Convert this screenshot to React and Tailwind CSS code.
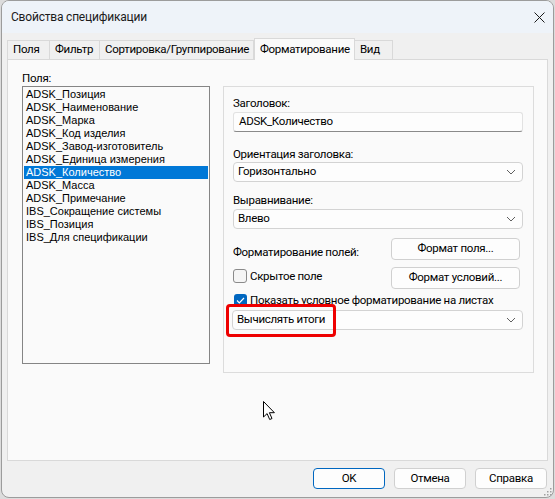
import React from 'react';

const ui = { fontFamily: 'Roboto, "Liberation Sans", sans-serif' };
const listFont = { fontFamily: '"Liberation Sans", Arial, sans-serif' };

const fields = [
  'ADSK_Позиция',
  'ADSK_Наименование',
  'ADSK_Марка',
  'ADSK_Код изделия',
  'ADSK_Завод-изготовитель',
  'ADSK_Единица измерения',
  'ADSK_Количество',
  'ADSK_Масса',
  'ADSK_Примечание',
  'IBS_Сокращение системы',
  'IBS_Позиция',
  'IBS_Для спецификации',
];

const tabs = [
  { label: 'Поля', w: 'w-[43px]' },
  { label: 'Фильтр', w: 'w-[51px]' },
  { label: 'Сортировка/Группирование', w: 'w-[155px]' },
  { label: 'Форматирование', w: 'w-[101px]', active: true },
  { label: 'Вид', w: 'w-[39px]' },
];

const Chevron = () => (
  <svg width="10" height="6" viewBox="0 0 10 6" className="shrink-0">
    <path d="M1 1l4 4 4-4" fill="none" stroke="#5f5f5f" strokeWidth="1" />
  </svg>
);

const Select = ({ value }) => (
  <div className="flex h-[20px] items-center justify-between rounded-[4px] border border-[#d3d3d3] bg-[#fdfdfd] pl-[4px] pr-[6px] text-black">
    <span>{value}</span>
    <Chevron />
  </div>
);

const Button = ({ children, primary, className = '' }) => (
  <div
    className={`flex items-center justify-center rounded-[4px] border bg-[#fdfdfd] text-black ${
      primary ? 'border-[#0067c0]' : 'border-[#d0d0d0]'
    } ${className}`}
  >
    {children}
  </div>
);

const Checkbox = ({ checked }) =>
  checked ? (
    <div className="flex h-[13px] w-[13px] shrink-0 items-center justify-center rounded-[3px] bg-[#0067c0]">
      <svg width="9" height="7" viewBox="0 0 9 7">
        <path d="M1 3.5l2.3 2.3L8 1" fill="none" stroke="#fff" strokeWidth="1.2" />
      </svg>
    </div>
  ) : (
    <div className="h-[14px] w-[14px] shrink-0 rounded-[3px] border border-[#8a8a8a] bg-[#f5f5f5]" />
  );

export default function App() {
  return (
    <div
      className="relative h-[499px] w-[555px] overflow-hidden whitespace-nowrap bg-[#dcdcdc] text-[11.5px] tracking-[-0.3px]"
      style={ui}
    >
      <div className="ml-[1px] flex h-[498px] w-[553px] flex-col overflow-hidden rounded-[8px] border border-[#9c9c9c] bg-[#f0f0f0]">
        {/* title bar */}
        <div className="flex h-[32px] shrink-0 items-center justify-between bg-[#eef3f9] pl-[9px] pr-[8px]">
          <span className="text-[12px] tracking-[-0.2px] text-[#1b1b1b]">Свойства спецификации</span>
          <svg width="11" height="11" viewBox="0 0 11 11">
            <path d="M0.5 0.5l10 10M10.5 0.5l-10 10" stroke="#1b1b1b" strokeWidth="1" />
          </svg>
        </div>

        <div className="flex flex-1 flex-col px-[5px] pt-[5px]">
          {/* tabs */}
          <div className="relative z-10 flex h-[21px] items-end">
            {tabs.map((t) => (
              <div
                key={t.label}
                className={`flex items-center border border-b-0 border-[#d9d9d9] text-black ${t.w} ${
                  t.active ? '-mb-px h-[22px] bg-[#fafafa] pl-[5px]' : 'h-[19px] bg-[#f0f0f0] pl-[5px] -ml-px first:ml-0'
                }`}
              >
                {t.label}
              </div>
            ))}
          </div>

          {/* page */}
          <div className="flex h-[402px] border border-[#d9d9d9] bg-[#fafafa] pl-[14px] pt-[10px]">
            <div className="flex flex-col">
              <div className="h-[16px] leading-[16px] text-black">Поля:</div>
              <div
                className="h-[278px] w-[188px] border border-[#858585] bg-[#fafafa] p-[1px] tracking-normal"
                style={listFont}
              >
                {fields.map((f) => (
                  <div
                    key={f}
                    className={`h-[13px] pl-[2px] text-[11px] leading-[13px] ${
                      f === 'ADSK_Количество' ? 'bg-[#0078d7] text-white' : 'text-black'
                    }`}
                  >
                    {f}
                  </div>
                ))}
              </div>
            </div>

            <div className="ml-[13px] mt-[16px] flex h-[287px] w-[311px] flex-col border border-[#dcdcdc] pl-[9px] pr-[10px] pt-[8px] text-black">
              <div className="h-[16px] leading-[16px]">Заголовок:</div>
              <div className="mt-[1px] flex h-[20px] items-center rounded-[3px] border border-[#e2e2e2] border-b-[#8a8a8a] bg-[#fdfdfd] pl-[5px]">
                ADSK_Количество
              </div>

              <div className="mt-[14px] h-[16px] leading-[16px]">Ориентация заголовка:</div>
              <Select value="Горизонтально" />

              <div className="mt-[10px] h-[16px] leading-[16px]">Выравнивание:</div>
              <div className="mt-[1px]">
                <Select value="Влево" />
              </div>

              <div className="mt-[9px] flex h-[22px] items-end justify-between">
                <span className="leading-[16px]">Форматирование полей:</span>
                <Button className="mr-[3px] h-[22px] w-[129px]">Формат поля...</Button>
              </div>

              <div className="mt-[7px] flex h-[22px] items-start justify-between">
                <div className="mt-[2px] flex items-center gap-[3px]">
                  <Checkbox />
                  <span className="leading-[14px]">Скрытое поле</span>
                </div>
                <Button className="mr-[3px] h-[22px] w-[129px]">Формат условий...</Button>
              </div>

              <div className="mt-[4px] flex h-[14px] items-center gap-[3px] pl-[1px]">
                <Checkbox checked />
                <span className="leading-[14px]">Показать условное форматирование на листах</span>
              </div>

              <div className="relative -ml-px mt-[3px]">
                <Select value="Вычислять итоги" />
                <div className="absolute left-[-6px] top-[-6px] h-[33px] w-[110px] rounded-[4px] border-[3px] border-[#ee0000]" />
              </div>
            </div>
          </div>

          {/* footer buttons */}
          <div className="mt-[7px] flex justify-end gap-[9px] pr-[1px]">
            <Button primary className="h-[21px] w-[72px]">OK</Button>
            <Button className="h-[21px] w-[72px]">Отмена</Button>
            <Button className="h-[21px] w-[72px]">Справка</Button>
          </div>
        </div>
      </div>

      {/* size grip */}
      <svg className="absolute bottom-[3px] right-[3px]" width="9" height="9" viewBox="0 0 9 9">
        {[[7, 1], [4, 4], [7, 4], [1, 7], [4, 7], [7, 7]].map(([x, y]) => (
          <rect key={`${x}-${y}`} x={x} y={y} width="1.5" height="1.5" fill="#a0a0a0" />
        ))}
      </svg>

      {/* mouse pointer */}
      <svg className="absolute left-[263px] top-[401px]" width="13" height="20" viewBox="0 0 13 20">
        <path
          d="M0.5 0.5v15.5l3.6-3.4 2.6 5.9 2.3-1-2.6-5.8h5z"
          fill="#fff"
          stroke="#000"
          strokeWidth="1"
          strokeLinejoin="round"
        />
      </svg>
    </div>
  );
}
